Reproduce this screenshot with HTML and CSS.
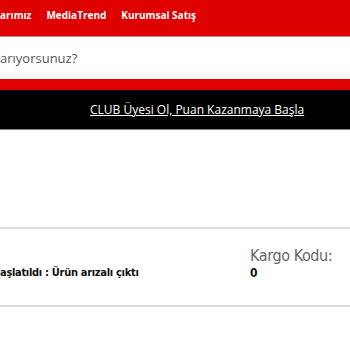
FILE: index.html
```html
<!DOCTYPE html>
<html lang="tr">
<head>
  <meta charset="UTF-8" />
  <title>Sipariş Detayı</title>
  <link rel="stylesheet" href="styles.css">
</head>
<body>
  <header class="top">
    <nav class="top-nav">
      <a href="#">arımız</a>
      <a href="#">MediaTrend</a>
      <a href="#">Kurumsal Satış</a>
    </nav>
    <div class="search">
      <input type="text" placeholder="arıyorsunuz?" />
    </div>
  </header>
  <div class="club-bar">
    <a href="#">CLUB Üyesi Ol, Puan Kazanmaya Başla</a>
  </div>
  <div class="spacer"></div>
  <div class="order-row">
    <div class="order-status">
      <p>aşlatıldı : Ürün arızalı çıktı</p>
    </div>
    <div class="cargo">
      <h4>Kargo Kodu:</h4>
      <p>0</p>
    </div>
  </div>
</body>
</html>
```

FILE: styles.css
```css
body {
  margin: 0;
  background: #fff;
  font-family: 'Open Sans', sans-serif;
  overflow: hidden;
}
.top {
  background-color: #df0000;
}
.top-nav {
  height: 36px;
  display: flex;
  align-items: center;
  gap: 15px;
  padding-bottom: 6px;
  box-sizing: border-box;
}
.top-nav a {
  color: #fff;
  font-size: 10px;
  font-weight: bold;
  text-decoration: none;
}
.search {
  padding-bottom: 11px;
}
.search input {
  display: block;
  width: 100%;
  height: 43px;
  box-sizing: border-box;
  border: none;
  border-top: 1px solid #c88;
  margin: 0;
  padding: 0;
  font-family: 'Open Sans', sans-serif;
  font-size: 13px;
  outline: none;
}
.search input::placeholder {
  color: #555;
}
.club-bar {
  background: #000;
  height: 39px;
  border-bottom: 1px solid #888;
  display: flex;
  align-items: center;
  padding-left: 90px;
}
.club-bar a {
  color: #fff;
  font-size: 12px;
}
.spacer {
  height: 97px;
  border-bottom: 2px solid #ddd;
}
.order-row {
  display: flex;
  height: 76px;
  border-bottom: 2px solid #ddd;
  font-family: 'DejaVu Sans Condensed', 'DejaVu Sans', sans-serif;
}
.order-status {
  width: 250px;
  padding-top: 37px;
}
.order-status p {
  margin: 0;
  font-size: 11px;
  font-weight: bold;
  letter-spacing: -0.3px;
  color: #111;
}
.cargo h4 {
  margin: 17px 0 0;
  font-size: 16px;
  font-weight: normal;
  letter-spacing: -0.4px;
  color: #666;
}
.cargo p {
  margin: 1px 0 0;
  font-size: 12px;
  font-weight: bold;
  color: #111;
}
```
